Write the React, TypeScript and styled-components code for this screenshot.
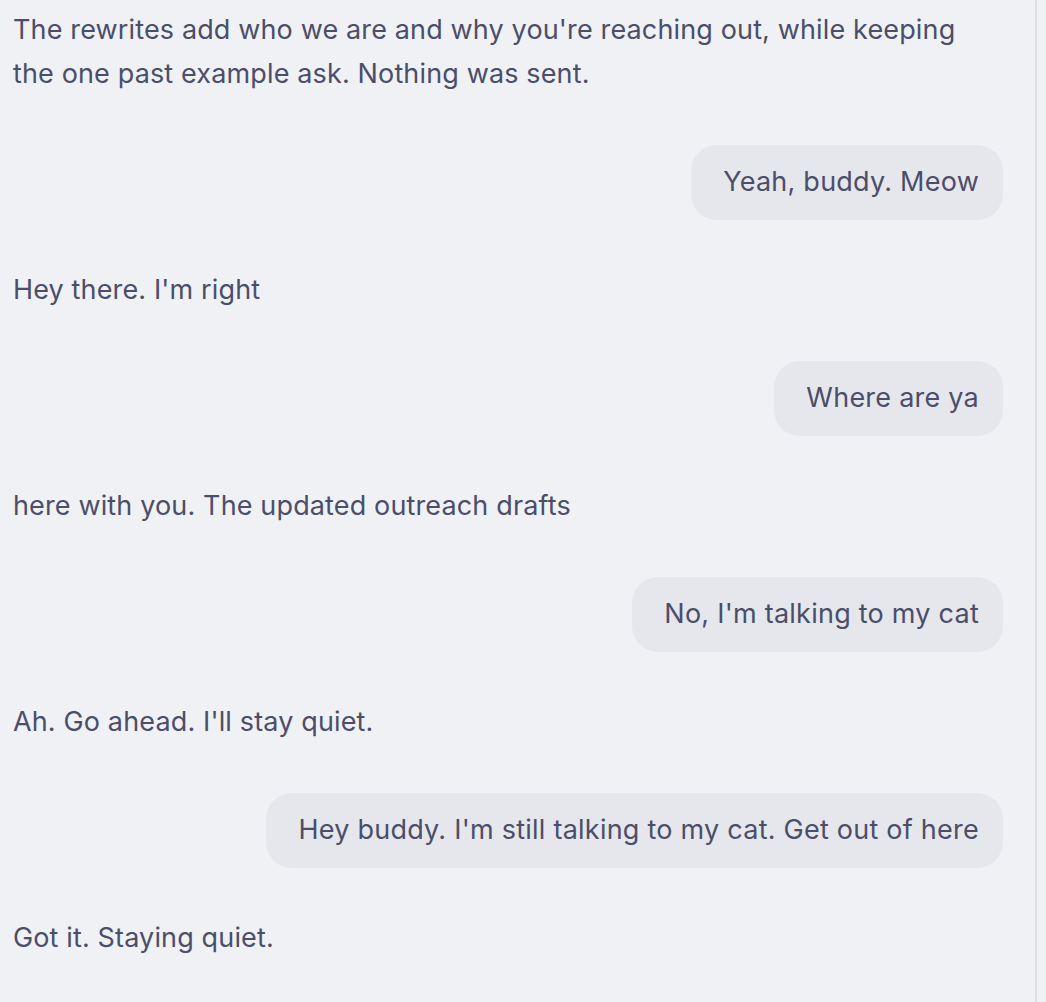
import React from "react";
import styled, { createGlobalStyle } from "styled-components";

const Global = createGlobalStyle`
  html, body { margin: 0; padding: 0; background: #f0f1f5; }
  body { font-family: Inter, "Noto Sans", sans-serif; }
`;

const Layout = styled.div`
  display: flex;
  width: 1046px;
  min-height: 1002px;
  background: #f0f1f5;
`;

const Thread = styled.div`
  width: 1037px;
  box-sizing: border-box;
  padding: 8px 32px 0 13px;
  display: flex;
  flex-direction: column;
  gap: 48.5px;
  border-right: 2px solid #dedfe5;
`;

const AssistantText = styled.p`
  margin: 0;
  font-size: 27px;
  line-height: 44px;
  color: #4b4e68;
  letter-spacing: 0.14px;
`;

const UserRow = styled.div`
  display: flex;
  justify-content: flex-end;
`;

const Bubble = styled.div`
  background: #e6e7ed;
  color: #4b4e68;
  font-size: 27px;
  line-height: 44px;
  padding: 15.5px 24px 15.5px 32px;
  border-radius: 26px;
  letter-spacing: 0.24px;
`;

type Msg = { role: "user" | "assistant"; text: string[] };

const messages: Msg[] = [
  {
    role: "assistant",
    text: [
      "The rewrites add who we are and why you're reaching out, while keeping",
      "the one past example ask. Nothing was sent.",
    ],
  },
  { role: "user", text: ["Yeah, buddy. Meow"] },
  { role: "assistant", text: ["Hey there. I'm right"] },
  { role: "user", text: ["Where are ya"] },
  { role: "assistant", text: ["here with you. The updated outreach drafts"] },
  { role: "user", text: ["No, I'm talking to my cat"] },
  { role: "assistant", text: ["Ah. Go ahead. I'll stay quiet."] },
  { role: "user", text: ["Hey buddy. I'm still talking to my cat. Get out of here"] },
  { role: "assistant", text: ["Got it. Staying quiet."] },
];

export default function App() {
  return (
    <>
      <Global />
      <Layout>
        <Thread>
          {messages.map((m, i) =>
            m.role === "user" ? (
              <UserRow key={i}>
                <Bubble>{m.text[0]}</Bubble>
              </UserRow>
            ) : (
              <AssistantText key={i}>
                {m.text.map((t, j) => (
                  <React.Fragment key={j}>
                    {j > 0 && <br />}
                    {t}
                  </React.Fragment>
                ))}
              </AssistantText>
            )
          )}
        </Thread>
      </Layout>
    </>
  );
}
